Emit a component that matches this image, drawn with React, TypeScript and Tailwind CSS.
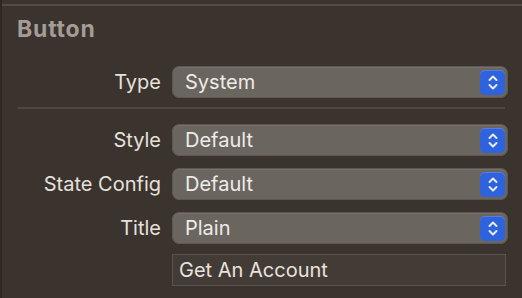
import React from "react";

function Stepper() {
  return (
    <div className="w-[25px] h-[25px] rounded-[5px] bg-[#2f63de] flex items-center justify-center shadow-[inset_0_1px_0_rgba(255,255,255,0.18)]">
      <svg width="12" height="17" viewBox="0 0 12 17" fill="none">
        <path d="M2.5 6 L6 2.5 L9.5 6" stroke="#e8eefc" strokeWidth="1.9" strokeLinecap="round" strokeLinejoin="round" />
        <path d="M2.5 11 L6 14.5 L9.5 11" stroke="#e8eefc" strokeWidth="1.9" strokeLinecap="round" strokeLinejoin="round" />
      </svg>
    </div>
  );
}

function Popup({ value }: { value: string }) {
  return (
    <div className="w-[336px] h-[32px] rounded-[7px] bg-[#6b6560] border border-[#5e5853] shadow-[inset_0_1px_0_rgba(255,255,255,0.08)] flex items-center justify-between pl-[12px] pr-[2px]">
      <span className="text-[20px] text-[#efebe7] leading-none">{value}</span>
      <Stepper />
    </div>
  );
}

function Row({ label, children, className = "" }: { label: string; children: React.ReactNode; className?: string }) {
  return (
    <div className={"flex items-center " + className}>
      <div className="w-[161px] text-right text-[20px] text-[#e6e1dc] leading-none">{label}</div>
      <div className="ml-[11px]">{children}</div>
    </div>
  );
}

export default function App() {
  return (
    <div
      className="w-[522px] h-[298px] bg-[#3b332e] overflow-hidden relative"
      style={{ fontFamily: "Inter, 'Noto Sans', sans-serif" }}
    >
      <div className="absolute left-0 top-0 w-[2px] h-full bg-[#2e2824]" />
      <div className="pt-[4px]">
        <div className="h-[2px] bg-[#524a44]" />
      </div>
      <div className="pl-[17px] pt-[11px] text-[23px] font-bold tracking-[0.8px] text-[#a39c97] leading-[24px]">Button</div>
      <Row label="Type" className="mt-[25px]">
        <Popup value="System" />
      </Row>
      <div className="ml-[18px] mr-[17px] mt-[9px] h-[2px] bg-[#4f4742]" />
      <Row label="Style" className="mt-[15px]">
        <Popup value="Default" />
      </Row>
      <Row label="State Config" className="mt-[12px]">
        <Popup value="Default" />
      </Row>
      <Row label="Title" className="mt-[12px]">
        <Popup value="Plain" />
      </Row>
      <Row label="" className="mt-[10px]">
        <div className="w-[334px] h-[32px] bg-[#433b36] border border-[#5a534d] flex items-center pl-[6px]">
          <span className="text-[20px] text-[#e8e3de] leading-none">Get An Account</span>
        </div>
      </Row>
    </div>
  );
}
